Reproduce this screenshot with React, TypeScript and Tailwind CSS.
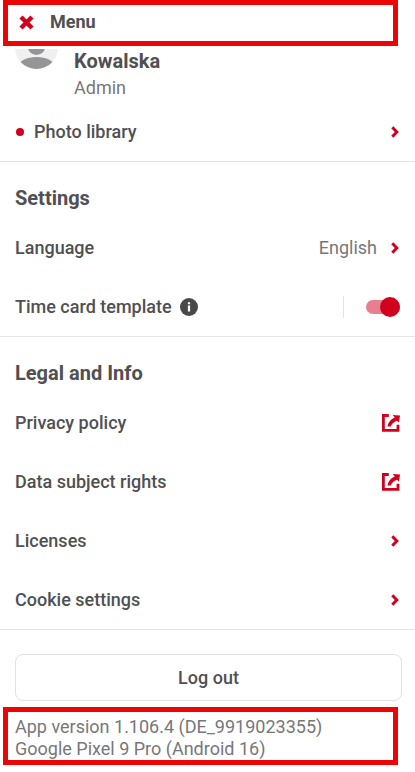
import React, { useState } from "react";

function CloseIcon() {
  return (
    <svg className="size-[15px]" viewBox="0 0 15 15" fill="none" stroke="#d2001e" strokeWidth={4.4}>
      <path d="M2 2 13 13M13 2 2 13" strokeLinejoin="round" />
    </svg>
  );
}

function ChevronIcon() {
  return (
    <svg className="mr-px w-2 h-3 shrink-0" viewBox="0 0 8 12" fill="none" stroke="#d2001e" strokeWidth={3}>
      <path d="M1.3 1.3 5.8 6 1.3 10.7" />
    </svg>
  );
}

function ExternalIcon() {
  return (
    <svg className="size-[18px] shrink-0" viewBox="0 0 18 18">
      <path d="M6.8 1.5H1.4V16.3H16V10.8" fill="none" stroke="#d2001e" strokeWidth={2.8} />
      <path d="M10.6 1 18 1.6 17 8.6 14.8 6.8C12 7.8 9.8 9.6 8.8 12.6H5.4C6 8.4 8.6 5 12.8 3.4Z" fill="#d2001e" />
    </svg>
  );
}

function InfoIcon() {
  return (
    <svg className="size-[18px]" viewBox="0 0 18 18">
      <circle cx="9" cy="9" r="9" fill="#48484a" />
      <path d="M7.9 7.4h2.2v6H7.9zM7.9 4.2h2.2v2H7.9z" fill="#fff" />
    </svg>
  );
}

function Avatar() {
  return (
    <svg className="w-[43px] h-5 shrink-0" viewBox="0 23 43 20">
      <defs>
        <clipPath id="avatar">
          <circle cx="21.5" cy="21.5" r="21.5" />
        </clipPath>
      </defs>
      <g clipPath="url(#avatar)">
        <rect width="43" height="43" fill="#f0f0f0" />
        <ellipse cx="21.5" cy="19.5" rx="9" ry="9.5" fill="#959597" />
        <ellipse cx="21.5" cy="40.5" rx="18" ry="9.5" fill="#959597" />
      </g>
    </svg>
  );
}

interface MenuRowProps {
  label: string;
  value?: string;
  dot?: boolean;
  external?: boolean;
}

function MenuRow({ label, value, dot, external }: MenuRowProps) {
  return (
    <a href="#" className="flex h-[59px] items-center px-[15px]">
      {dot && <span className="mx-px mr-2.5 size-2 rounded-full bg-[#d2001e]" />}
      <span className="font-medium">{label}</span>
      <span className="ml-auto mr-3.5 text-[#77777a]">{value}</span>
      {external ? <ExternalIcon /> : <ChevronIcon />}
    </a>
  );
}

function SectionTitle({ children }: { children: React.ReactNode }) {
  return <h2 className="px-[15px] pt-6 pb-2 text-[20px] font-bold leading-6">{children}</h2>;
}

export default function App() {
  const [timeCard, setTimeCard] = useState(true);

  return (
    <div className="min-h-screen bg-white font-['Roboto',sans-serif] text-[18px] leading-[22px] text-[#505052]">
      {/* Header */}
      <header className="ml-[3px] mr-[17px] flex h-[46px] items-center gap-4 border-5 border-[#eb0505] pb-0.5 pl-[11px]">
        <button type="button" aria-label="Close menu">
          <CloseIcon />
        </button>
        <h1 className="font-bold">Menu</h1>
      </header>

      <main>
        {/* Profile */}
        <section className="border-b border-[#e6e6e6] pt-[3px]">
          <div className="flex h-[53px] gap-4 px-[15px]">
            <Avatar />
            <div>
              <p className="text-[20px] font-bold leading-6">Kowalska</p>
              <p className="pt-1 text-[#77777a]">Admin</p>
            </div>
          </div>
          <MenuRow label="Photo library" dot />
        </section>

        <section className="border-b border-[#e6e6e6]">
          <SectionTitle>Settings</SectionTitle>
          <MenuRow label="Language" value="English" />
          <div className="flex h-[59px] items-center px-[15px]">
            <label htmlFor="time-card" className="font-medium">
              Time card template
            </label>
            <button type="button" aria-label="About time card template" className="ml-2">
              <InfoIcon />
            </button>
            <div className="ml-auto flex items-center border-l border-[#e2e2e2] pl-[22px] h-[22px]">
              <input
                id="time-card"
                type="checkbox"
                role="switch"
                checked={timeCard}
                onChange={(e) => setTimeCard(e.target.checked)}
                className="flex h-3.5 w-[34px] appearance-none items-center rounded-full bg-[#c4c4c4] before:size-5 before:shrink-0 before:rounded-full before:bg-[#77777a] checked:justify-end checked:bg-[#e97f8e] checked:before:bg-[#d2001e]"
              />
            </div>
          </div>
        </section>

        <section className="border-b border-[#e6e6e6]">
          <SectionTitle>Legal and Info</SectionTitle>
          <MenuRow label="Privacy policy" external />
          <MenuRow label="Data subject rights" external />
          <MenuRow label="Licenses" />
          <MenuRow label="Cookie settings" />
        </section>

        <div className="pt-6 pr-[13px] pl-[15px]">
          <button type="button" className="h-[47px] w-full rounded-lg border border-[#e2e2e2] font-medium">
            Log out
          </button>
        </div>
      </main>

      {/* App info */}
      <footer className="mt-1.5 ml-[3px] mr-[17px] border-5 border-[#eb0505] pt-1 pl-[7px] text-[#77777a]">
        <p>App version 1.106.4 (DE_9919023355)</p>
        <p>Google Pixel 9 Pro (Android 16)</p>
      </footer>
    </div>
  );
}
